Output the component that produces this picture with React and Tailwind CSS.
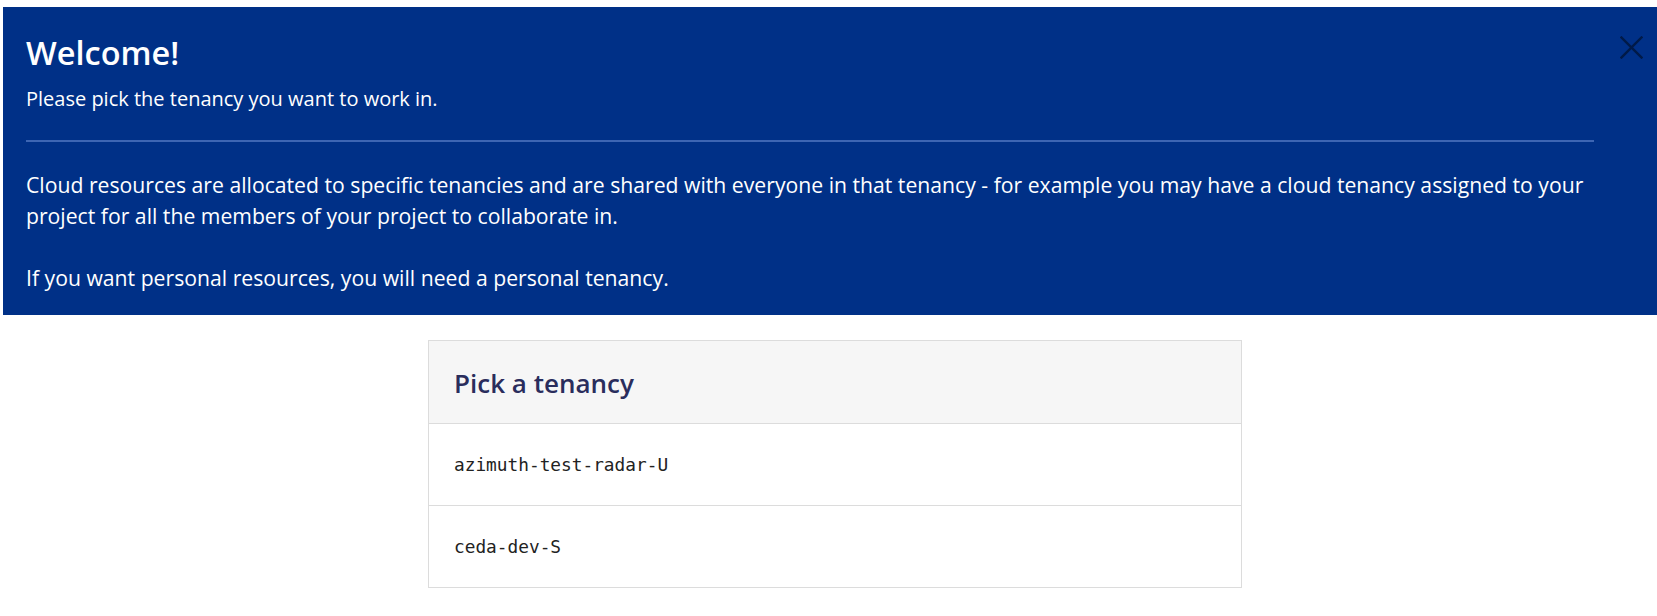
import React from 'react';

// Bandeau de bienvenue + choix du tenancy
const tenancies = ['azimuth-test-radar-U', 'ceda-dev-S'];

function CloseIcon() {
    return (
        <svg width="23" height="23" viewBox="0 0 23 23" fill="none" stroke="currentColor" strokeWidth="2.4" strokeLinecap="square">
            <path d="M1.5 1.5 L21.5 21.5" />
            <path d="M21.5 1.5 L1.5 21.5" />
        </svg>
    );
}

export default function App() {
    return (
        <div className="min-h-[616px] bg-white font-['Open_Sans','Liberation_Sans',sans-serif] pt-[7px]">
            {/* Welcome banner */}
            <div className="relative ml-[3px] bg-[#003087] text-white pl-[23px] pr-[63px] pt-[27px] pb-[21px]">
                <button className="absolute top-[29px] right-[14px] text-[#001a48]">
                    <CloseIcon />
                </button>

                <h1 className="text-[32.5px] leading-[38px] font-semibold">Welcome!</h1>
                <p className="mt-[12px] text-[20px] leading-[30px]">Please pick the tenancy you want to work in.</p>

                <hr className="mt-[26px] border-0 h-[2px] bg-[#3d65b3]" />

                <p className="mt-[28px] text-[21.2px] leading-[30.5px]">
                    Cloud resources are allocated to specific tenancies and are shared with everyone in that tenancy - for example you may have a cloud tenancy assigned to your project for all the members of your project to collaborate in.
                </p>
                <p className="mt-[32px] text-[21.2px] leading-[30.5px]">
                    If you want personal resources, you will need a personal tenancy.
                </p>
            </div>

            {/* Tenancy list */}
            <div className="mt-[25px] ml-[428px] w-[814px] border border-[#dcdcdc]">
                <div className="bg-[#f6f6f6] px-[25px] pt-[25px] pb-[23px] border-b border-[#dcdcdc]">
                    <h2 className="text-[26px] leading-[34px] font-semibold text-[#2a2d5c]">Pick a tenancy</h2>
                </div>
                {tenancies.map((t, i) => (
                    <div
                        key={t}
                        className={`px-[25px] py-[28px] ${i < tenancies.length - 1 ? 'border-b border-[#dcdcdc]' : ''}`}
                    >
                        <span className="font-['DejaVu_Sans_Mono',monospace] text-[17.8px] leading-[25px] text-[#222]">{t}</span>
                    </div>
                ))}
            </div>
        </div>
    );
}
